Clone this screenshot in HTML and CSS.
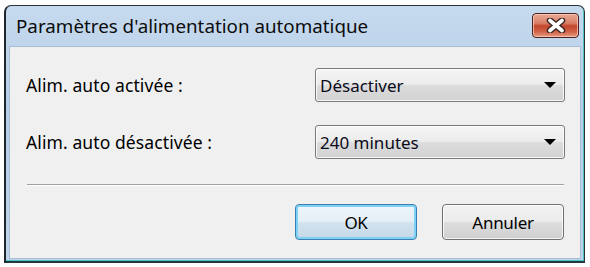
FILE: index.html
```html
<!DOCTYPE html>
<html lang="fr">
<head>
<meta charset="utf-8">
<link rel="stylesheet" href="styles.css">
</head>
<body>
<div class="window">
  <div class="titlebar">
    <span class="title">Paramètres d'alimentation automatique</span>
    <button class="close" aria-label="Fermer">
      <svg width="22" height="15" viewBox="0 0 22 15">
        <path d="M5 2.5 L17 12.5 M17 2.5 L5 12.5" stroke="#3a2626" stroke-width="6.5" stroke-linecap="round"/>
        <path d="M5 2.5 L17 12.5 M17 2.5 L5 12.5" stroke="#ffffff" stroke-width="3.6" stroke-linecap="round"/>
      </svg>
    </button>
  </div>
  <div class="content">
    <div class="row">
      <span class="label">Alim. auto activée :</span>
      <div class="select"><span>Désactiver</span><i class="arrow"></i></div>
    </div>
    <div class="row">
      <span class="label">Alim. auto désactivée :</span>
      <div class="select"><span>240 minutes</span><i class="arrow"></i></div>
    </div>
    <hr class="sep">
    <div class="buttons">
      <button class="btn default">OK</button>
      <button class="btn">Annuler</button>
    </div>
  </div>
</div>
</body>
</html>
```
FILE: styles.css
```css
html, body {
  margin: 0;
  padding: 0;
  background: #ffffff;
}
body {
  font-family: "Noto Sans", "Open Sans", sans-serif;
  color: #000;
}
.window {
  margin: 5px 0 0 4px;
  width: 581px;
  height: 258px;
  box-sizing: border-box;
  border: 1px solid #2a333c;
  border-left: 2px solid #1e252c;
  border-bottom: 2px solid #1f3b3b;
  border-radius: 7px 7px 0 0;
  background: linear-gradient(180deg, #c6daee 0%, #b6cee7 40%, #bfd4ea 100%);
  display: flex;
  flex-direction: column;
  padding: 0 3px 2px 3px;
  box-shadow: inset -1px -1px 0 #4fc2c2;
}
.titlebar {
  height: 40px;
  flex: none;
  display: flex;
  align-items: center;
  justify-content: space-between;
  padding-left: 7px;
}
.title {
  font-size: 18.8px;
  color: #0c0c0c;
}
.close {
  width: 47px;
  height: 25px;
  margin-top: -1px;
  margin-right: 2px;
  border: 1px solid #4b2220;
  border-radius: 4px;
  background: linear-gradient(180deg, #eaa995 0%, #d98068 40%, #c3452d 52%, #cf5f44 75%, #e79b82 100%);
  box-shadow: inset 0 0 0 1px rgba(255,210,200,0.7);
  display: flex;
  align-items: center;
  justify-content: center;
  padding: 0;
}
.content {
  flex: 1;
  background: #f0f0f0;
  border: 1px solid #a9bed4;
  padding: 21px 15px 0 16px;
  display: flex;
  flex-direction: column;
}
.row {
  display: flex;
  align-items: center;
  justify-content: space-between;
  height: 34px;
  margin-bottom: 23px;
}
.label {
  font-size: 17.5px;
  letter-spacing: 0.1px;
}
.select {
  width: 250px;
  height: 34px;
  box-sizing: border-box;
  border: 1px solid #7a7a7a;
  border-radius: 3px;
  background: linear-gradient(180deg, #f5f5f5 0%, #ececec 48%, #dcdcdc 52%, #d2d2d2 100%);
  box-shadow: inset 0 0 0 1px rgba(255,255,255,0.8);
  display: flex;
  align-items: center;
  justify-content: space-between;
  padding: 0 8px 0 4px;
  font-size: 17px;
  color: #0a0a1a;
}
.arrow {
  width: 0;
  height: 0;
  border-left: 6px solid transparent;
  border-right: 6px solid transparent;
  border-top: 6px solid #000;
}
.sep {
  margin: 2px 0 0 1px;
  width: 537px;
  border: 0;
  border-top: 1px solid #a0a0a0;
  border-bottom: 1px solid #ffffff;
  height: 0;
}
.buttons {
  display: flex;
  justify-content: flex-end;
  gap: 25px;
  margin-top: 18px;
  padding-right: 1px;
}
.btn {
  width: 122px;
  height: 36px;
  box-sizing: border-box;
  border: 1px solid #707070;
  border-radius: 4px;
  background: linear-gradient(180deg, #f2f2f2 0%, #ebebeb 48%, #dddddd 52%, #cfcfcf 100%);
  box-shadow: inset 0 0 0 1px rgba(255,255,255,0.8);
  font-family: "Noto Sans", "Open Sans", sans-serif;
  font-size: 17px;
  letter-spacing: -0.3px;
  color: #000;
  padding: 0;
}
.btn.default {
  border: 1px solid #3c7fb1;
  box-shadow: inset 0 0 0 2px #7fd0f5;
  background: linear-gradient(180deg, #eef6fb 0%, #e3eef6 48%, #d2e2ee 52%, #c4d9e8 100%);
}
```
